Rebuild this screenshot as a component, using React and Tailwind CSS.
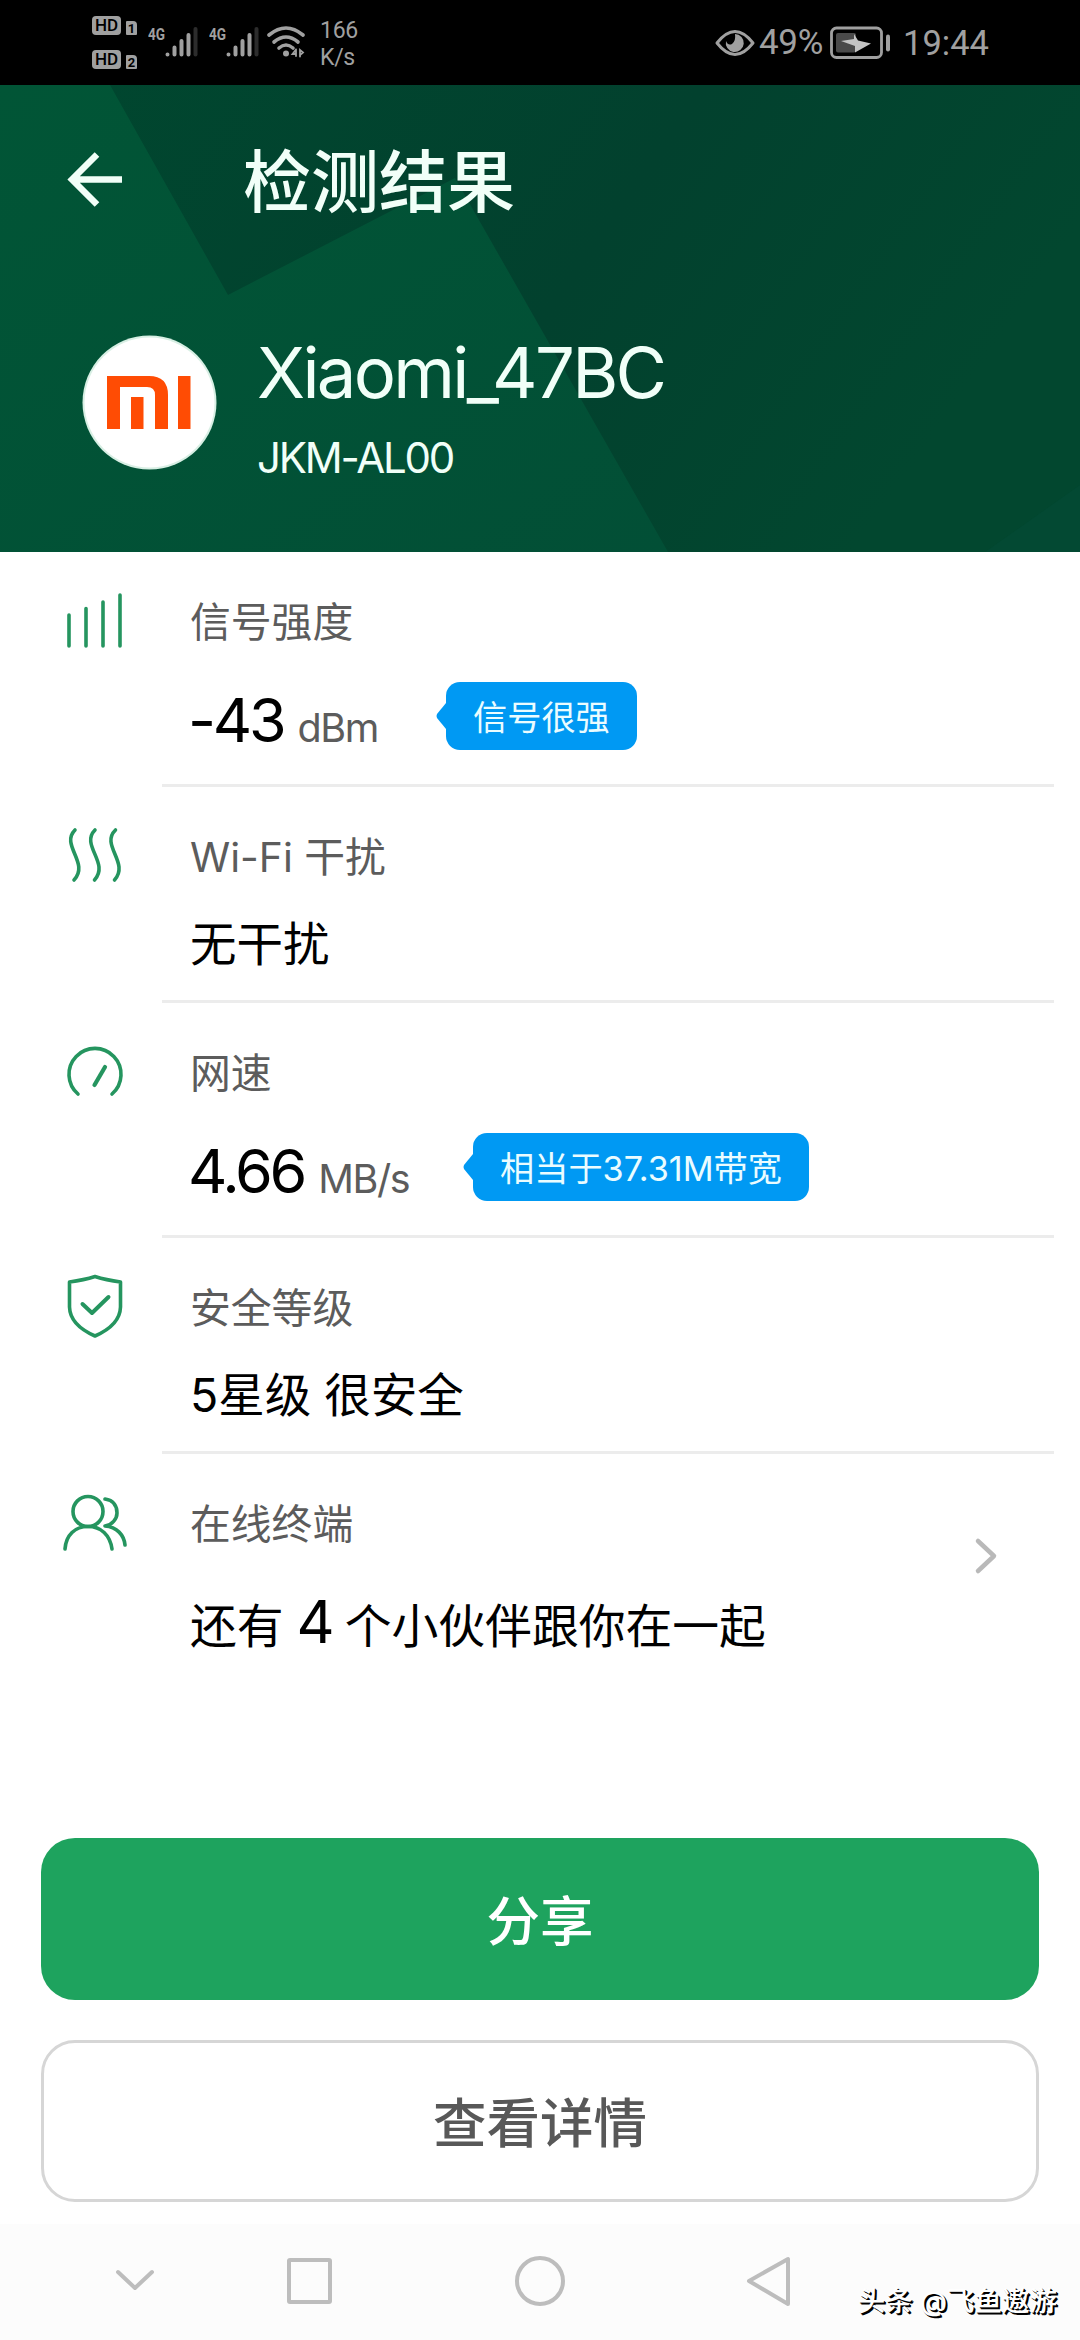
import { Fragment } from "react";

const results = [
    {
        icon: "signal",
        label: "信号强度",
        value: "-43",
        unit: "dBm",
        tag: "信号很强",
        row: "h-[232px]",
        valueWidth: "w-[246px]"
    },
    {
        icon: "waves",
        label: "Wi-Fi 干扰",
        text: "无干扰",
        row: "h-[213px]"
    },
    {
        icon: "speed",
        label: "网速",
        value: "4.66",
        unit: "MB/s",
        tag: "相当于37.31M带宽",
        row: "h-[232px]",
        valueWidth: "w-[273px]"
    },
    {
        icon: "shield",
        label: "安全等级",
        text: "5星级 很安全",
        row: "h-[213px]"
    }
];

export default function App() {

    return (
        <div className="flex flex-col w-[1080px] h-[2340px] bg-white overflow-hidden font-['Inter','Noto_Sans_CJK_SC',sans-serif]">
            <StatusBar />
            <Header />

            {/* Results */}
            <main className="flex flex-col h-[1286px] shrink-0">
                {results.map((item) => (
                    <Fragment key={item.label}>
                        <ResultRow item={item} />
                        <div className="h-[3px] ml-[162px] mr-[26px] bg-[#ececec]" />
                    </Fragment>
                ))}

                <div className="flex h-[220px]">
                    <div className="w-[189px] shrink-0 pl-[60px] pt-[40px]">
                        <RowIcon name="users" />
                    </div>
                    <div className="flex-1 pt-[40px] pl-px">
                        <p className="text-[40.8px] leading-[60px] text-[#5c5c5c]">在线终端</p>
                        <p className="mt-[36px] text-[46.8px] leading-[64px] text-black whitespace-nowrap">
                            还有<span className="ml-[13px] mr-[10px] text-[59px]">4</span>个小伙伴跟你在一起
                        </p>
                    </div>
                    <svg className="mt-[83px] mr-[82px]" width="24" height="38" viewBox="0 0 24 38" fill="none" stroke="#b9b9b9" strokeWidth="4.5" strokeLinecap="round" strokeLinejoin="round">
                        <path d="M4 4 L20 19 L4 34" />
                    </svg>
                </div>
            </main>

            {/* Actions */}
            <div className="flex flex-col gap-[40px] px-[41px] h-[386px] shrink-0">
                <button className="h-[162px] pt-[7px] rounded-[34px] bg-[#1ea35e] text-white text-[53.5px] font-medium">
                    分享
                </button>
                <button className="h-[162px] pt-[7px] rounded-[34px] border-[3px] border-[#d6d6d6] text-[#585858] text-[53.5px] font-medium">
                    查看详情
                </button>
            </div>

            <NavBar />
        </div>
    );
}

function StatusBar() {
    return (
        <div className="flex items-start h-[85px] shrink-0 bg-black text-[#a0a0a0] pl-[92px]">
            <div className="flex flex-col gap-[15px] pt-[16px] w-[56px]">
                <HdBadge number="1" />
                <HdBadge number="2" />
            </div>
            <CellSignal />
            <CellSignal />

            {/* Wi-Fi */}
            <svg className="mt-[24px] -ml-[3px]" width="40" height="36" viewBox="0 0 40 36" fill="none" stroke="currentColor" strokeWidth="3.6" strokeLinecap="round">
                <path d="M2 11 Q19 -3 36 11" />
                <path d="M7 18 Q19 8 31 18" />
                <path d="M12 24 Q19 18 26 24" />
                <circle cx="19" cy="29.5" r="3" fill="currentColor" stroke="none" />
                <path d="M29 25.5 V32 M29 25.5 L25.5 30 H29 M33 32.500 V26 L36 28.500 L33 31" strokeWidth="1.8" />
            </svg>

            <div className="ml-[13px] pt-[17px] text-[23px] leading-[27px] font-['Roboto'] tracking-[-0.3px]">
                <p>166</p>
                <p>K/s</p>
            </div>

            <div className="flex items-center ml-auto mr-[91px] h-[85px]">
                <svg width="40" height="28" viewBox="0 0 40 28">
                    <path d="M2 14 Q20 -9 38 14 Q20 37 2 14 Z" fill="none" stroke="currentColor" strokeWidth="3" strokeLinejoin="round" />
                    <path d="M20 5 A9 9 0 1 1 11 12 Q13 17 17 15 Q21 12 20 5 Z" fill="currentColor" />
                </svg>
                <span className="ml-[4px] w-[67px] pt-[2px] text-[35px] font-['Roboto'] whitespace-nowrap tracking-[-0.3px]">49%</span>
                <svg className="ml-[4px]" width="62" height="34" viewBox="0 0 62 34">
                    <rect x="1.500" y="2" width="50" height="29.500" rx="5" fill="none" stroke="currentColor" strokeWidth="2.800" />
                    <rect x="6" y="7" width="20" height="19.500" rx="2" fill="#4a4a4a" />
                    <path d="M11 15 L25 20 V26.500 L41 17.500 L28 14.500 L24 8 V13 Z" fill="#c4c4c4" />
                    <rect x="56" y="8.500" width="4" height="17" rx="2" fill="currentColor" />
                </svg>
                <span className="ml-[11px] w-[86px] pt-[2px] text-[34.5px] font-['Roboto'] whitespace-nowrap">19:44</span>
            </div>
        </div>
    );
}

function HdBadge({ number }) {
    return (
        <div className="flex items-end gap-[5px] h-[19px]">
            <span className="flex items-center justify-center w-[29px] h-[19px] rounded-[4px] bg-[#a0a0a0] text-black text-[17px] leading-none font-['Roboto'] font-medium">
                HD
            </span>
            <span className="flex items-center justify-center w-[11px] h-[14px] rounded-tr-[4px] rounded-[1px] bg-[#a0a0a0] text-black text-[13px] leading-none font-['Roboto'] font-bold">
                {number}
            </span>
        </div>
    );
}

function CellSignal() {
    return (
        <div className="flex w-[61px] pt-[26px]">
            <span className="w-[17px] text-[17px] leading-[16px] font-['Roboto'] font-bold">
                <span className="inline-block origin-left scale-x-[0.8]">4G</span>
            </span>
            <svg width="34" height="34" viewBox="0 0 34 34" stroke="currentColor" strokeWidth="4" strokeLinecap="round">
                <path d="M2.500 28.500 V28.600 M9.500 21.500 V28.600 M16.500 15 V28.600 M23.500 9 V28.600" />
                <path d="M30.500 3 V28.600" stroke="#2c2c2c" />
            </svg>
        </div>
    );
}

function Header() {
    return (
        <header className="relative h-[467px] shrink-0 text-[#f1fff8]">
            <svg className="absolute inset-0" width="1080" height="467" viewBox="0 0 1080 467">
                <defs>
                    <linearGradient id="shade" x1="0" y1="0" x2="1" y2="0.3">
                        <stop offset="0" stopColor="#00472f" />
                        <stop offset="0.6" stopColor="#02412e" />
                        <stop offset="1" stopColor="#02472f" />
                    </linearGradient>
                    <linearGradient id="leaf" x1="0" y1="0" x2="1" y2="1">
                        <stop offset="0" stopColor="#015536" />
                        <stop offset="1" stopColor="#024f36" />
                    </linearGradient>
                </defs>
                <rect width="1080" height="467" fill="url(#shade)" />
                <path d="M0 0 H110 L228 210 L455 93 L668 467 H0 Z" fill="url(#leaf)" />
                <path d="M1080 400 V467 H985 Z" fill="#034933" />
            </svg>

            <div className="relative flex items-start pt-[62px] pl-[64px]">
                <svg className="-mt-[2px]" width="60" height="68" viewBox="0 0 60 68" fill="none" stroke="currentColor" strokeWidth="6.500">
                    <path d="M7 34.500 H58 M33 9.500 L8 34.500 L33 59.500" />
                </svg>
                <h1 className="ml-[119px] text-[68px] leading-[70px] font-medium">检测结果</h1>
            </div>

            <div className="relative flex pt-[118px] pl-[82px]">
                {/* Logo */}
                <svg width="135" height="135" viewBox="0 0 135 135">
                    <circle cx="67.500" cy="67.500" r="67" fill="#d8efe4" />
                    <circle cx="67.500" cy="67.500" r="65" fill="#ffffff" />
                    <g fill="#ff4c04">
                        <path d="M25 41 H67 Q86 41 86 60 V94 H73 V60 Q73 52 65 52 H38 V94 H25 Z" />
                        <rect x="49" y="62" width="12.500" height="32" />
                        <rect x="96" y="41" width="12.500" height="53" />
                    </g>
                </svg>
                <div className="ml-[40px] whitespace-nowrap">
                    <p className="text-[70.5px] leading-[76px] tracking-[-2.7px]">Xiaomi_47BC</p>
                    <p className="mt-[9px] text-[42px] leading-[76px] tracking-[-2.2px]">JKM-AL00</p>
                </div>
            </div>
        </header>
    );
}

function ResultRow({ item }) {
    return (
        <div className={`flex ${item.row}`}>
            <div className="w-[189px] shrink-0 pl-[60px] pt-[40px]">
                <RowIcon name={item.icon} />
            </div>

            <div className="pt-[40px] pl-px whitespace-nowrap">
                <p className="text-[40.8px] leading-[60px] text-[#5c5c5c]">{item.label}</p>

                {item.text && (
                    <p className="mt-[25px] text-[46.5px] leading-[64px] text-black">{item.text}</p>
                )}

                {item.value && (
                    <div className="flex items-center mt-[28px] h-[72px]">
                        <p className={`pt-[24px] leading-[72px] text-[#5c5c5c] ${item.valueWidth}`}>
                            <span className="-ml-[2px] text-[61px] tracking-[-3.2px] text-black">{item.value}</span>
                            <span className="ml-[14px] text-[39.5px] tracking-[-1.4px]">{item.unit}</span>
                        </p>
                        <Tag text={item.tag} />
                    </div>
                )}
            </div>
        </div>
    );
}

function Tag({ text }) {
    return (
        <div className="flex items-center">
            <svg width="10" height="26" viewBox="0 0 10 26">
                <path d="M10 0 L1 11 Q0 13 1 15 L10 26 Z" fill="#0099f3" />
            </svg>
            <span className="h-[68px] px-[27px] rounded-[14px] bg-[#0099f3] text-[#eafcff] text-[34.2px] leading-[71px]">
                {text}
            </span>
        </div>
    );
}

function RowIcon({ name }) {
    return (
        <svg className="overflow-visible" width="70" height="64" viewBox="0 0 70 64" fill="none" stroke="#25955f" strokeWidth="3.600" strokeLinecap="round" strokeLinejoin="round">
            {name === "signal" && (
                <path d="M9 23 V54 M26 16.500 V54 M43 10 V54 M60 3 V54" />
            )}
            {name === "waves" && (
                <>
                    <path d="M15 3 C0 18 30 36 14 53" />
                    <path d="M35 3 C20 18 50 36 34.500 53" />
                    <path d="M55.500 3 C40 18 70 36 54.500 53" />
                </>
            )}
            {name === "speed" && (
                <>
                    <path d="M18 51 A26 26 0 1 1 52 51" />
                    <path d="M34.500 42 L45 24" strokeWidth="4.200" />
                </>
            )}
            {name === "shield" && (
                <>
                    <path d="M9.500 4 Q24 2 35 -1.500 Q46 2 60.500 4 V29 Q60 47 35 58 Q10 47 9.500 29 Z" />
                    <path d="M22.500 26 L32 35 L48.500 19" strokeWidth="4" />
                </>
            )}
            {name === "users" && (
                <>
                    <circle cx="28" cy="17.500" r="15" />
                    <path d="M5 55 C6 41 15 32.500 28 32.500 C41 32.500 50 41 52 55" />
                    <path d="M45 5 C54 6 57 13 57 19 C57 25 52 31 45 32 C57 33 64 41 65 51" />
                </>
            )}
        </svg>
    );
}

function NavBar() {
    return (
        <nav className="relative h-[116px] shrink-0 bg-[#fcfcfc]">
            <svg width="1080" height="116" viewBox="0 0 1080 116" fill="none" stroke="#bdbdbd" strokeWidth="4" strokeLinejoin="round" strokeLinecap="round">
                <path d="M118 48 L135 64 L152 48" />
                <rect x="289" y="36" width="41" height="42" rx="1" />
                <circle cx="540" cy="57" r="23" />
                <path d="M788 35 V80 L749 57 Z" />
            </svg>
            <p className="absolute right-[23px] top-[57px] text-[27.5px] leading-[40px] font-medium text-white whitespace-nowrap [text-shadow:2px_2px_0_#000,1px_1px_0_#000]">
                头条 @飞鱼遨游
            </p>
        </nav>
    );
}
